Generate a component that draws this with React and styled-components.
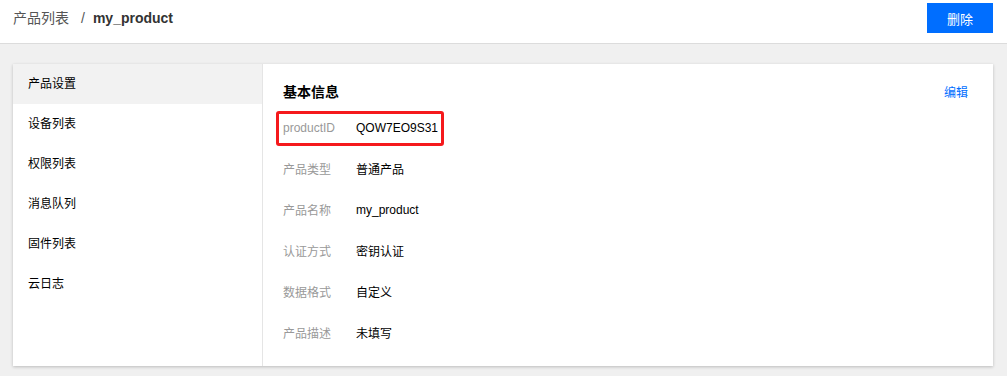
import React from "react";
import styled, { createGlobalStyle } from "styled-components";

const Global = createGlobalStyle`
  html, body { margin: 0; padding: 0; background: #f0f0f0; }
  body { font-family: "Liberation Sans", "Noto Sans CJK SC", sans-serif; font-size: 12px; color: #000; }
`;

const Page = styled.div`
  min-height: 376px;
  background: #f0f0f0;
`;

const Header = styled.header`
  display: flex;
  align-items: center;
  justify-content: space-between;
  height: 30px;
  padding: 3px 14px 10px 13px;
  background: #fff;
  border-bottom: 1px solid #dcdcdc;
`;

const Breadcrumb = styled.div`
  display: flex;
  align-items: center;
  font-size: 14px;
  line-height: 20px;
`;

const Crumb = styled.span`
  color: ${(p) => (p.$current ? "#333" : "#555")};
  font-weight: ${(p) => (p.$current ? 700 : 400)};
`;

const Sep = styled.span`
  color: #555;
  margin: 0 8px 0 12px;
`;

const DangerButton = styled.button`
  width: 66px;
  height: 30px;
  border: none;
  background: #006eff;
  color: #fff;
  font-family: inherit;
  font-size: 13px;
  cursor: pointer;
`;

const Card = styled.div`
  display: flex;
  margin: 20px 14px 0 13px;
  background: #fff;
  box-shadow: 0 1px 3px rgba(0, 0, 0, 0.22);
`;

const Side = styled.nav`
  width: 249px;
  flex-shrink: 0;
  border-right: 1px solid #e5e5e5;
`;

const SideItem = styled.div`
  height: 40px;
  line-height: 40px;
  padding-left: 15px;
  font-size: 12px;
  color: #000;
  background: ${(p) => (p.$active ? "#f2f2f2" : "#fff")};
`;

const Main = styled.section`
  flex: 1;
  padding: 17px 25px 13px 20px;
`;

const TitleRow = styled.div`
  display: flex;
  align-items: center;
  justify-content: space-between;
  height: 20px;
  margin-bottom: 6px;
`;

const Title = styled.h3`
  margin: 0;
  font-size: 14px;
  font-weight: 700;
  color: #000;
`;

const EditLink = styled.a`
  color: #006eff;
  font-size: 12px;
  text-decoration: none;
  cursor: pointer;
`;

const Row = styled.div`
  position: relative;
  display: flex;
  align-items: center;
  height: 41px;
  font-size: 12px;
  ${(p) =>
    p.$highlight &&
    `
    &::after {
      content: "";
      position: absolute;
      left: -7px;
      top: 4px;
      width: 168px;
      height: 35px;
      box-sizing: border-box;
      border: 3px solid #f5191c;
      border-radius: 3px;
    }
  `}
`;

const Label = styled.span`
  width: 73px;
  color: #999;
`;

const Value = styled.span`
  color: #000;
`;

const nav = ["产品设置", "设备列表", "权限列表", "消息队列", "固件列表", "云日志"];
const info = [
  ["productID", "QOW7EO9S31"],
  ["产品类型", "普通产品"],
  ["产品名称", "my_product"],
  ["认证方式", "密钥认证"],
  ["数据格式", "自定义"],
  ["产品描述", "未填写"],
];

export default function App() {
  return (
    <Page>
      <Global />
      <Header>
        <Breadcrumb>
          <Crumb>产品列表</Crumb>
          <Sep>/</Sep>
          <Crumb $current>my_product</Crumb>
        </Breadcrumb>
        <DangerButton>删除</DangerButton>
      </Header>
      <Card>
        <Side>
          {nav.map((n, i) => (
            <SideItem key={n} $active={i === 0}>
              {n}
            </SideItem>
          ))}
        </Side>
        <Main>
          <TitleRow>
            <Title>基本信息</Title>
            <EditLink>编辑</EditLink>
          </TitleRow>
          {info.map(([k, v], i) => (
            <Row key={k} $highlight={i === 0}>
              <Label>{k}</Label>
              <Value>{v}</Value>
            </Row>
          ))}
        </Main>
      </Card>
    </Page>
  );
}
